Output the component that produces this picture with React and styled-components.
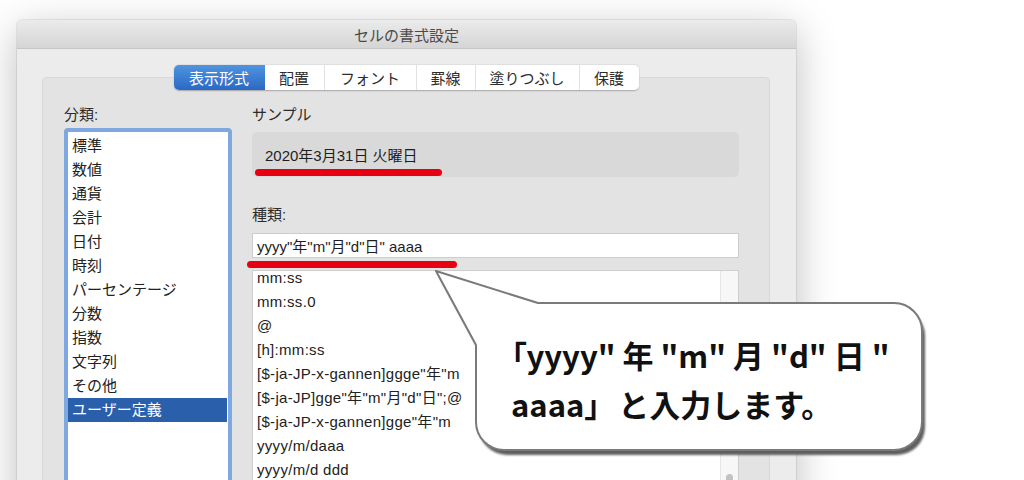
import React from "react";
import styled, { createGlobalStyle } from "styled-components";

const GlobalStyle = createGlobalStyle`
  html, body { margin: 0; padding: 0; background: #ffffff; }
  body {
    font-family: "Liberation Sans", "Noto Sans CJK JP", sans-serif;
    color: #222;
  }
  * { box-sizing: border-box; }
`;

const Stage = styled.div`
  position: relative;
  width: 1024px;
  height: 480px;
  overflow: hidden;
  padding: 20px 0 0 17px;
  background: #ffffff;
`;

const Window = styled.div`
  width: 779px;
  height: 520px;
  background: #ececec;
  border-radius: 5px 5px 0 0;
  box-shadow: 0 10px 42px rgba(0, 0, 0, 0.26), 0 0 0 1px rgba(0, 0, 0, 0.07);
  display: flex;
  flex-direction: column;
`;

const TitleBar = styled.div`
  height: 29px;
  flex: none;
  display: flex;
  align-items: center;
  justify-content: center;
  background: linear-gradient(#ebebeb, #d5d5d5);
  border-bottom: 1px solid #c6c6c6;
  border-radius: 5px 5px 0 0;
  font-size: 15px;
  color: #4a4a4a;
`;

const WindowBody = styled.div`
  flex: 1;
  padding: 16px 26px 0 25px;
  display: flex;
  flex-direction: column;
`;

const TabRow = styled.div`
  display: flex;
  justify-content: center;
  position: relative;
  z-index: 1;
`;

const TabGroup = styled.div`
  display: flex;
  background: #ffffff;
  border-radius: 5px;
  box-shadow: 0 0.5px 1.5px rgba(0, 0, 0, 0.28);
  overflow: hidden;
`;

const Tab = styled.div`
  width: ${(p) => p.$w}px;
  height: 25px;
  display: flex;
  align-items: center;
  justify-content: center;
  font-size: 15px;
  color: ${(p) => (p.$active ? "#ffffff" : "#2c2c2c")};
  background: ${(p) => (p.$active ? "linear-gradient(#5093e0, #2a69c4)" : "#ffffff")};
  border-left: ${(p) => (p.$first || p.$afterActive ? "none" : "1px solid #e2e2e2")};
`;

const GroupBox = styled.div`
  margin-top: -13px;
  flex: 1;
  background: #e3e3e3;
  border: 1px solid #d8d8d8;
  border-bottom: none;
  border-radius: 5px 5px 0 0;
  padding: 27px 30px 0 21px;
  display: grid;
  grid-template-columns: 168px 487px;
  column-gap: 20px;
`;

const Column = styled.div`
  display: flex;
  flex-direction: column;
`;

const Label = styled.div`
  font-size: 15px;
  line-height: 20px;
  height: 20px;
  color: #2b2b2b;
  margin-top: ${(p) => p.$mt || 0}px;
  margin-bottom: ${(p) => p.$mb || 0}px;
`;

const CategoryList = styled.div`
  flex: 1;
  background: #ffffff;
  border: 4px solid #80a8e0;
  border-radius: 4px;
  padding-top: 2px;
`;

const CategoryItem = styled.div`
  height: 24px;
  line-height: 24px;
  padding-left: 4px;
  margin: 0 1px 0 0;
  font-size: 15px;
  color: ${(p) => (p.$selected ? "#ffffff" : "#222")};
  background: ${(p) => (p.$selected ? "#2a5fab" : "transparent")};
`;

const SampleBox = styled.div`
  height: 45px;
  background: #d9d9d9;
  border-radius: 5px;
  display: flex;
  align-items: center;
  padding-left: 13px;
  font-size: 15px;
  color: #1e1e1e;
`;

const FormatInput = styled.div`
  height: 25px;
  background: #ffffff;
  border: 1px solid #cdcdcd;
  display: flex;
  align-items: center;
  padding-left: 4px;
  font-size: 15px;
  color: #1e1e1e;
`;

const FormatList = styled.div`
  margin-top: 12px;
  flex: 1;
  background: #ffffff;
  border: 1px solid #cfcfcf;
  display: grid;
  grid-template-columns: 1fr 18px;
  overflow: hidden;
`;

const FormatItems = styled.div`
  margin-top: -5px;
`;

const FormatItem = styled.div`
  height: 24px;
  line-height: 24px;
  padding-left: 4px;
  font-size: 15px;
  letter-spacing: 0.3px;
  color: #222;
  white-space: nowrap;
`;

const ScrollTrack = styled.div`
  background: #f7f7f7;
  border-left: 1px solid #e6e6e6;
  display: flex;
  justify-content: center;
  padding-top: 203px;
`;

const ScrollThumb = styled.div`
  width: 7px;
  height: 40px;
  border-radius: 4px;
  background: #c2c2c2;
`;

const Underline = styled.div`
  position: absolute;
  left: ${(p) => p.$x}px;
  top: ${(p) => p.$y}px;
  width: ${(p) => p.$w}px;
  height: 7px;
  border-radius: 4px;
  background: #e60012;
`;

const BubbleArt = styled.svg`
  position: absolute;
  left: 0;
  top: 0;
`;

const BubbleText = styled.div`
  position: absolute;
  left: 511px;
  top: 330px;
  display: flex;
  flex-direction: column;
  font-family: "Noto Sans CJK JP", sans-serif;
  font-weight: 700;
  font-size: 31px;
  color: #111;
  white-space: nowrap;
`;

const BubbleLine = styled.div`
  height: 49px;
  line-height: 49px;
  word-spacing: ${(p) => p.$ws || 0}px;
`;

const Bracket = styled.span`
  font-feature-settings: "palt";
`;

const tabs = [
  { label: "表示形式", w: 91 },
  { label: "配置", w: 59 },
  { label: "フォント", w: 92 },
  { label: "罫線", w: 59 },
  { label: "塗りつぶし", w: 104 },
  { label: "保護", w: 60 },
];

const categories = [
  "標準",
  "数値",
  "通貨",
  "会計",
  "日付",
  "時刻",
  "パーセンテージ",
  "分数",
  "指数",
  "文字列",
  "その他",
  "ユーザー定義",
  "",
  "",
];

const formats = [
  "mm:ss",
  "mm:ss.0",
  "@",
  "[h]:mm:ss",
  '[$-ja-JP-x-gannen]ggge"年"m',
  '[$-ja-JP]gge"年"m"月"d"日";@',
  '[$-ja-JP-x-gannen]gge"年"m',
  "yyyy/m/daaa",
  "yyyy/m/d ddd",
];

const bubblePath =
  "M538,303 H894 A28,28 0 0 1 922,331 V422 A28,28 0 0 1 894,450 H504 A28,28 0 0 1 476,422 V345 L436,271 Z";

export default function App() {
  return (
    <>
      <GlobalStyle />
      <Stage>
        <Window>
          <TitleBar>セルの書式設定</TitleBar>
          <WindowBody>
            <TabRow>
              <TabGroup>
                {tabs.map((t, i) => (
                  <Tab
                    key={t.label}
                    $w={t.w}
                    $active={i === 0}
                    $first={i === 0}
                    $afterActive={i === 1}
                  >
                    {t.label}
                  </Tab>
                ))}
              </TabGroup>
            </TabRow>
            <GroupBox>
              <Column>
                <Label $mb={3}>分類:</Label>
                <CategoryList>
                  {categories.map((c, i) => (
                    <CategoryItem key={i} $selected={i === 11}>
                      {c}
                    </CategoryItem>
                  ))}
                </CategoryList>
              </Column>
              <Column>
                <Label $mb={7}>サンプル</Label>
                <SampleBox>2020年3月31日 火曜日</SampleBox>
                <Label $mt={28} $mb={8}>種類:</Label>
                <FormatInput>yyyy"年"m"月"d"日" aaaa</FormatInput>
                <FormatList>
                  <FormatItems>
                    {formats.map((f) => (
                      <FormatItem key={f}>{f}</FormatItem>
                    ))}
                  </FormatItems>
                  <ScrollTrack>
                    <ScrollThumb />
                  </ScrollTrack>
                </FormatList>
              </Column>
            </GroupBox>
          </WindowBody>
        </Window>

        <Underline $x={255} $y={169} $w={187} />
        <Underline $x={247} $y={261} $w={210} />

        <BubbleArt width="1024" height="480" viewBox="0 0 1024 480">
          <defs>
            <filter id="soft" x="-10%" y="-10%" width="130%" height="130%">
              <feGaussianBlur stdDeviation="1.2" />
            </filter>
          </defs>
          <path d={bubblePath} transform="translate(3,5)" fill="#5e5e5e" filter="url(#soft)" />
          <path d={bubblePath} fill="#ffffff" stroke="#7a7a7a" strokeWidth="2" strokeLinejoin="round" />
        </BubbleArt>
        <BubbleText>
          <BubbleLine>
            <Bracket>「</Bracket>yyyy" 年 "m" 月 "d" 日 "
          </BubbleLine>
          <BubbleLine $ws={-4}>aaaa」 と入力します。</BubbleLine>
        </BubbleText>
      </Stage>
    </>
  );
}
